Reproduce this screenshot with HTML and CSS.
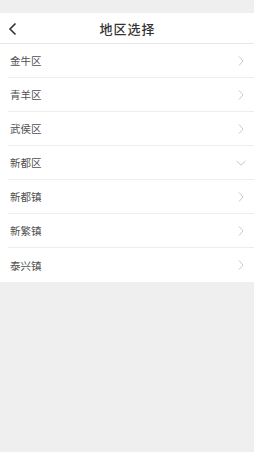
FILE: index.html
```html
<!DOCTYPE html>
<html lang="zh">
<head>
<meta charset="utf-8">
<link rel="stylesheet" href="styles.css">
</head>
<body>
<div class="status"></div>
<header class="nav">
  <span class="back"><svg width="10" height="14" viewBox="0 0 10 14"><path d="M7.5 1.5 L2 7 L7.5 12.5" fill="none" stroke="#333" stroke-width="1.6"/></svg></span>
  <h1 class="title">地区选择</h1>
</header>
<ul class="list">
  <li class="row"><span>金牛区</span><svg class="chev" width="8" height="12" viewBox="0 0 8 12"><path d="M2 1.5 L6 6 L2 10.5" fill="none" stroke="#c9c9c9" stroke-width="1"/></svg></li>
  <li class="row"><span>青羊区</span><svg class="chev" width="8" height="12" viewBox="0 0 8 12"><path d="M2 1.5 L6 6 L2 10.5" fill="none" stroke="#c9c9c9" stroke-width="1"/></svg></li>
  <li class="row"><span>武侯区</span><svg class="chev" width="8" height="12" viewBox="0 0 8 12"><path d="M2 1.5 L6 6 L2 10.5" fill="none" stroke="#c9c9c9" stroke-width="1"/></svg></li>
  <li class="row"><span>新都区</span><svg class="chev down" width="12" height="8" viewBox="0 0 12 8"><path d="M1.5 2 L6 6 L10.5 2" fill="none" stroke="#c9c9c9" stroke-width="1"/></svg></li>
  <li class="row"><span>新都镇</span><svg class="chev" width="8" height="12" viewBox="0 0 8 12"><path d="M2 1.5 L6 6 L2 10.5" fill="none" stroke="#c9c9c9" stroke-width="1"/></svg></li>
  <li class="row"><span>新繁镇</span><svg class="chev" width="8" height="12" viewBox="0 0 8 12"><path d="M2 1.5 L6 6 L2 10.5" fill="none" stroke="#c9c9c9" stroke-width="1"/></svg></li>
  <li class="row"><span>泰兴镇</span><svg class="chev" width="8" height="12" viewBox="0 0 8 12"><path d="M2 1.5 L6 6 L2 10.5" fill="none" stroke="#c9c9c9" stroke-width="1"/></svg></li>
</ul>
</body>
</html>
```

FILE: styles.css
```css
* { box-sizing: border-box; }
html, body { margin: 0; padding: 0; }
body {
  background: #efefef;
  font-family: "Noto Sans CJK SC", "Noto Sans", sans-serif;
  width: 254px;
  height: 452px;
  overflow: hidden;
}
.status { height: 13px; background: #efefef; }
.nav {
  height: 31px;
  background: #fff;
  border-bottom: 1px solid #e6e6e6;
  display: flex;
  align-items: center;
  justify-content: center;
  position: relative;
}
.back {
  position: absolute;
  left: 8px;
  top: 9px;
  display: flex;
}
.title {
  margin: 0;
  font-size: 13px;
  font-weight: 500;
  letter-spacing: 1px;
  color: #333;
  line-height: 1;
  padding-left: 1px;
}
.list {
  list-style: none;
  margin: 0;
  padding: 0 0 0 8px;
  background: #fff;
}
.row {
  height: 34px;
  border-bottom: 1px solid #eeeeee;
  display: flex;
  align-items: center;
  justify-content: space-between;
  padding: 0 9px 0 2px;
  font-size: 10.5px;
  color: #505050;
}
.row:last-child { border-bottom: none; }
.chev { display: block; }
.down { margin-right: -2px; }
```
